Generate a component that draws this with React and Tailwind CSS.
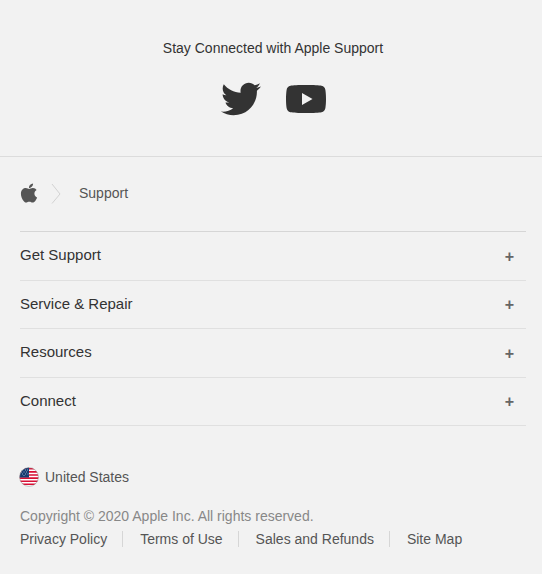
import { FaApple, FaTwitter } from "react-icons/fa";

const sections = ["Get Support", "Service & Repair", "Resources", "Connect"];
const legalLinks = ["Privacy Policy", "Terms of Use", "Sales and Refunds", "Site Map"];

function YouTubeIcon() {
  return (
    <svg viewBox="0 0 40 28" className="h-7 w-10" fill="currentColor" aria-hidden="true">
      <path
        fillRule="evenodd"
        d="M20 0C28 0 33 .3 35.5 .8C37.8 1.3 39 2.6 39.4 5C39.8 7.5 40 10.500 40 14S39.8 20.500 39.4 23C39 25.400 37.800 26.700 35.500 27.200C33 27.700 28 28 20 28S7 27.700 4.500 27.200C2.200 26.700 1 25.400 .6 23C.2 20.500 0 17.500 0 14S.2 7.500 .6 5C1 2.600 2.200 1.300 4.500 .8C7 .3 12 0 20 0ZM16 8V20L26.500 14Z"
      />
    </svg>
  );
}

function Chevron() {
  return (
    <svg viewBox="0 0 10 22" className="ml-[13px] h-[22px] w-2.5" fill="none" stroke="#d2d2d2" aria-hidden="true">
      <path d="M1 2L9 12L1 21.500" />
    </svg>
  );
}

function FlagIcon() {
  return (
    <svg viewBox="0 0 20 20" className="size-5" aria-hidden="true">
      <defs>
        <clipPath id="flag-circle">
          <circle cx="10" cy="10" r="9.500" />
        </clipPath>
      </defs>
      <g clipPath="url(#flag-circle)">
        <rect width="20" height="20" fill="#fff" />
        <path
          d="M0 1.800H20M0 4.900H20M0 8H20M0 11.100H20M0 14.200H20M0 17.300H20"
          stroke="#d80f35"
          strokeWidth="1.600"
        />
        <rect width="10" height="10.500" fill="#163a70" />
        <path
          d="M3 3h1M6 3h1M8 3h1M4.500 5h1M7 5h1M3 7h1M6 7h1M8.500 7h1M2 5h1M4.500 8.500h1"
          stroke="#8fa6c6"
          strokeWidth="1"
        />
      </g>
      <circle cx="10" cy="10" r="9.400" fill="none" stroke="#8a8a8a" strokeOpacity=".6" strokeWidth=".8" />
    </svg>
  );
}

export default function App() {
  return (
    <div className="min-h-screen bg-[#f2f2f2] font-['Liberation_Sans',Arial,sans-serif] text-[#333]">
      <section className="flex flex-col items-center border-b border-[#dcdcdc] pt-9 pb-[37px] pl-1">
        <h2 className="text-sm leading-6">Stay Connected with Apple Support</h2>
        <div className="mt-[19px] flex items-center gap-[25px]">
          <a href="#twitter" aria-label="Twitter">
            <FaTwitter className="size-10" />
          </a>
          <a href="#youtube" aria-label="YouTube">
            <YouTubeIcon />
          </a>
        </div>
      </section>

      <footer className="pr-4 pl-5 text-sm">
        <nav aria-label="Breadcrumb" className="flex h-[74px] items-center pb-0.5 text-[#555]">
          <a href="#home" aria-label="Apple">
            <FaApple className="h-[22px] w-[18px]" />
          </a>
          <Chevron />
          <a href="#support" className="ml-[18px] text-sm">
            Support
          </a>
        </nav>

        <ul className="grid min-h-[195px] grid-rows-4 border-t border-[#d6d6d6]">
          {sections.map((title) => (
            <li key={title} className="flex border-b border-[#e0e0e0]">
              <button type="button" className="flex w-full items-center justify-between pr-3 pb-0.5 text-left text-[15px]">
                <span>{title}</span>
                <span aria-hidden="true" className="pt-1 text-base font-bold text-[#666]">
                  +
                </span>
              </button>
            </li>
          ))}
        </ul>

        <a href="#region" className="mt-[41px] -ml-px flex w-fit items-center gap-1.5 text-[#555]">
          <FlagIcon />
          United States
        </a>

        <p className="mt-[19px] text-[#888]">Copyright © 2020 Apple Inc. All rights reserved.</p>
        <ul className="mt-[5px] flex flex-wrap text-[#555]">
          {legalLinks.map((label) => (
            <li key={label} className="mr-[17px] border-r border-[#d6d6d6] pr-[15px] leading-4 last:mr-0 last:border-0">
              <a href="#legal">{label}</a>
            </li>
          ))}
        </ul>
      </footer>
    </div>
  );
}
